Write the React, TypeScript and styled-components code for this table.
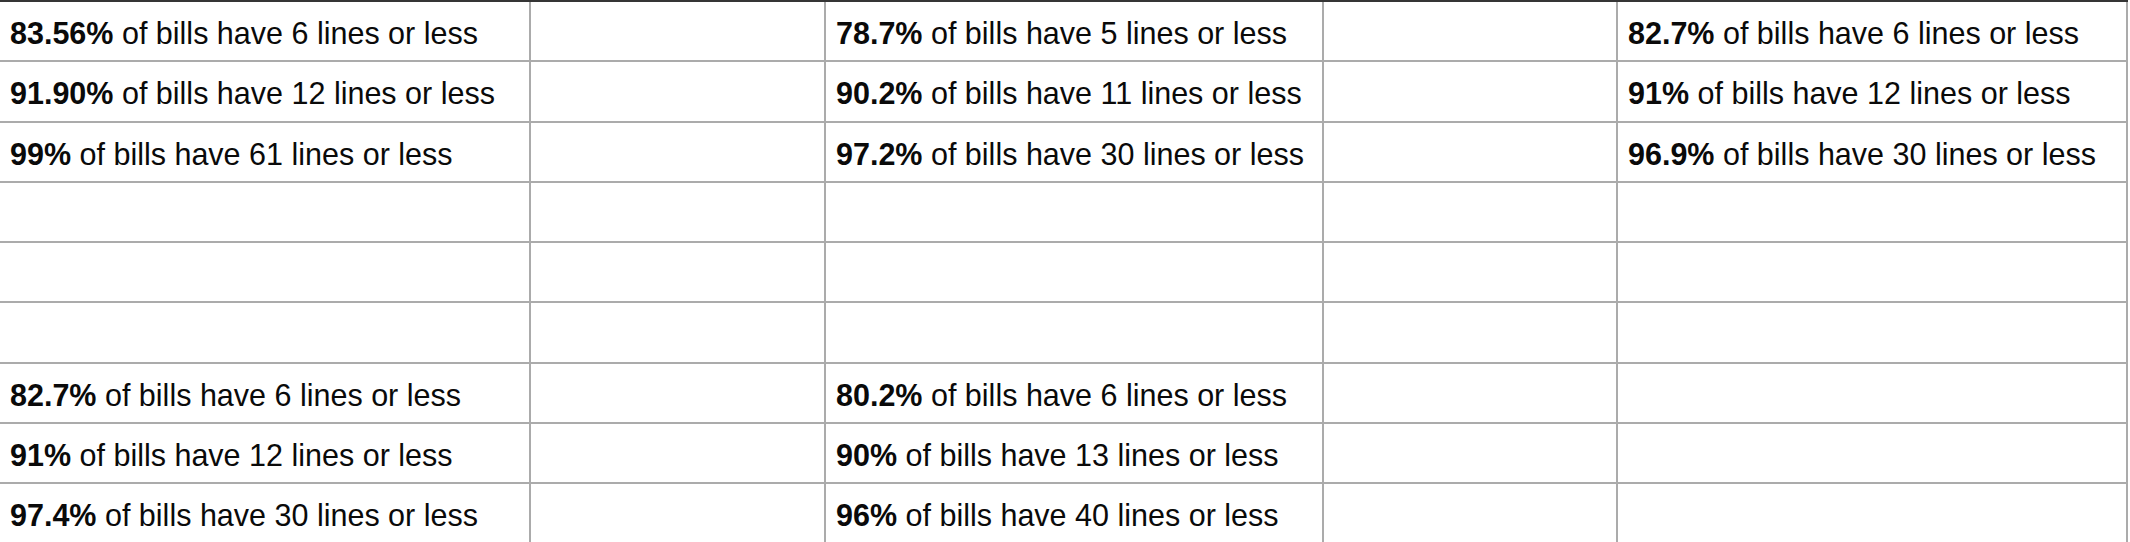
import React from 'react';
import styled, { createGlobalStyle } from 'styled-components';

type Stat = { pct: string; lines: number } | null;

const rows: Stat[][] = [
  [{ pct: '83.56%', lines: 6 }, null, { pct: '78.7%', lines: 5 }, null, { pct: '82.7%', lines: 6 }],
  [{ pct: '91.90%', lines: 12 }, null, { pct: '90.2%', lines: 11 }, null, { pct: '91%', lines: 12 }],
  [{ pct: '99%', lines: 61 }, null, { pct: '97.2%', lines: 30 }, null, { pct: '96.9%', lines: 30 }],
  [null, null, null, null, null],
  [null, null, null, null, null],
  [null, null, null, null, null],
  [{ pct: '82.7%', lines: 6 }, null, { pct: '80.2%', lines: 6 }, null, null],
  [{ pct: '91%', lines: 12 }, null, { pct: '90%', lines: 13 }, null, null],
  [{ pct: '97.4%', lines: 30 }, null, { pct: '96%', lines: 40 }, null, null],
];

const App: React.FC = () => {
  return (
    <>
      <GlobalStyle />
      <Table>
        {rows.map((row, r) =>
          row.map((cell, c) => (
            <Cell key={`${r}-${c}`}>
              {cell && (
                <Text>
                  <Pct>{cell.pct}</Pct> of bills have {cell.lines} lines or less
                </Text>
              )}
            </Cell>
          ))
        )}
      </Table>
    </>
  );
};

export default App;

const GlobalStyle = createGlobalStyle`
  html, body {
    margin: 0;
    padding: 0;
    background: #ffffff;
    overflow: hidden;
  }
`;

const Table = styled.div`
  width: 2128px;
  display: grid;
  grid-template-columns: 531px 295px 498px 294px 510px;
  grid-auto-rows: 60.3px;
  border-top: 2px solid #353535;
  font-family: 'Liberation Sans', Arial, sans-serif;
  font-size: 30.5px;
  color: #0a0a0a;
`;

const Cell = styled.div`
  box-sizing: border-box;
  display: flex;
  align-items: center;
  padding: 5px 0 0 10px;
  border-right: 2px solid #ababab;
  border-bottom: 2px solid #ababab;
  white-space: nowrap;
  overflow: hidden;
`;

const Text = styled.span`
  line-height: 1.15;
`;

const Pct = styled.strong`
  font-weight: 700;
`;
